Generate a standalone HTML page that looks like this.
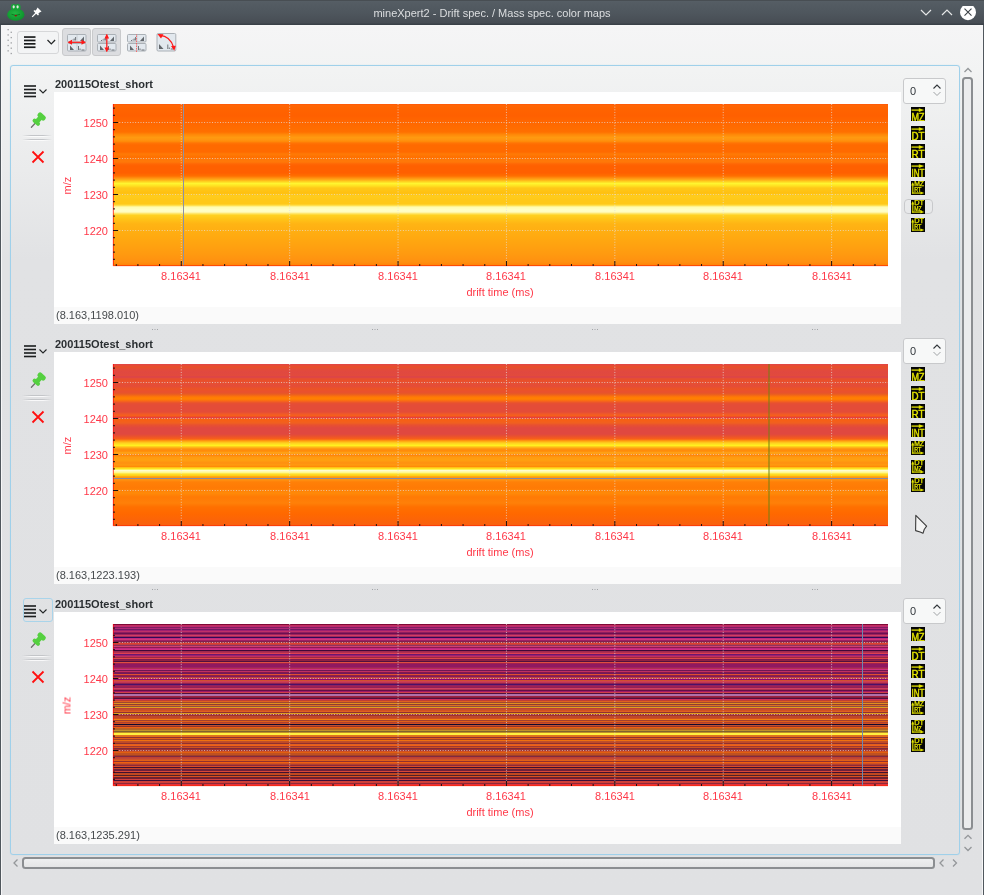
<!DOCTYPE html>
<html><head><meta charset="utf-8"><title>mineXpert2</title>
<style>
html,body{margin:0;padding:0;width:984px;height:895px;overflow:hidden;background:#e0e1e3;font-family:"Liberation Sans", sans-serif;}
</style></head><body>
<div style="position:absolute;left:0px;top:0px;width:984px;height:25px;background:linear-gradient(#484e53 0px,#484e53 1px,#565f66 1px,#545c63 3px,#4f575e 12px,#474d54 23px,#3a4148 24px,#3a4148 25px);"></div>
<div style="position:absolute;left:291.50px;width:400px;text-align:center;top:8.29px;font-size:11px;line-height:11px;color:#dcdee0;font-weight:normal;white-space:nowrap;will-change:transform">mineXpert2 - Drift spec. / Mass spec. color maps</div>
<svg style="position:absolute;left:6px;top:2px" width="20" height="20" viewBox="0 0 20 20">
<defs><radialGradient id="fg" cx="0.45" cy="0.4" r="0.7"><stop offset="0" stop-color="#22b843"/><stop offset="1" stop-color="#0a8a28"/></radialGradient></defs>
<ellipse cx="9.8" cy="12.6" rx="8.7" ry="6.2" fill="url(#fg)"/>
<ellipse cx="7.6" cy="5.2" rx="2.7" ry="3.1" fill="#16a436"/>
<ellipse cx="11.9" cy="5.2" rx="2.7" ry="3.1" fill="#16a436"/>
<ellipse cx="7.7" cy="4.8" rx="1.1" ry="1.6" fill="#e0e6e0"/>
<ellipse cx="11.6" cy="4.8" rx="1.1" ry="1.6" fill="#e0e6e0"/>
<path d="M5.5 12.3 Q9.8 14.5 14 12.3" stroke="#08701c" stroke-width="0.8" fill="none"/>
<ellipse cx="9.8" cy="13.6" rx="1.1" ry="0.9" fill="#a01010"/>
</svg>
<svg style="position:absolute;left:31px;top:6px" width="12" height="12" viewBox="0 0 12 12">
<path d="M6.5 1.5 L10.5 5.5 L8.5 6.5 L6.5 8.5 L5.5 7.5 L3.5 5.5 L5.5 3.5 Z" fill="#fff"/>
<path d="M1.2 10.8 L5 7" stroke="#fff" stroke-width="1.2"/>
<path d="M3 4.5 L7.5 9" stroke="#fff" stroke-width="1.5"/>
</svg>
<svg style="position:absolute;left:918px;top:6px" width="60" height="18" viewBox="0 0 60 18">
<path d="M3 4 L8 9 L13 4" stroke="#e6e7e8" stroke-width="1.2" fill="none"/>
<path d="M24 9 L29 4 L34 9" stroke="#e6e7e8" stroke-width="1.2" fill="none"/>
<circle cx="50" cy="6.2" r="8" fill="#ffffff"/>
<path d="M46.5 2.7 L53.5 9.7 M53.5 2.7 L46.5 9.7" stroke="#3c4247" stroke-width="1.1"/>
</svg>
<div style="position:absolute;left:0px;top:25px;width:984px;height:870px;background:linear-gradient(#f8f8f8 0px,#f5f5f6 2px,#f2f3f3 45px,#eaebec 145px,#e1e2e4 235px,#e0e1e3 870px);"></div>
<div style="position:absolute;left:0px;top:25px;width:1px;height:870px;background:#50575d;"></div>
<div style="position:absolute;left:1px;top:25px;width:1px;height:870px;background:#f6f6f7;"></div>
<div style="position:absolute;left:983px;top:25px;width:1px;height:870px;background:#50575d;"></div>
<div style="position:absolute;left:982px;top:25px;width:1px;height:870px;background:#f6f6f7;"></div>
<svg style="position:absolute;left:7px;top:28.7px" width="6" height="28"><rect x="0.5" y="0.00" width="1.3" height="1.3" fill="#9c9ea1"/><rect x="3.6" y="2.65" width="1.3" height="1.3" fill="#9c9ea1"/><rect x="0.5" y="5.30" width="1.3" height="1.3" fill="#9c9ea1"/><rect x="3.6" y="7.95" width="1.3" height="1.3" fill="#9c9ea1"/><rect x="0.5" y="10.60" width="1.3" height="1.3" fill="#9c9ea1"/><rect x="3.6" y="13.25" width="1.3" height="1.3" fill="#9c9ea1"/><rect x="0.5" y="15.90" width="1.3" height="1.3" fill="#9c9ea1"/><rect x="3.6" y="18.55" width="1.3" height="1.3" fill="#9c9ea1"/><rect x="0.5" y="21.20" width="1.3" height="1.3" fill="#9c9ea1"/><rect x="3.6" y="23.85" width="1.3" height="1.3" fill="#9c9ea1"/></svg>
<div style="position:absolute;left:17px;top:31px;width:42px;height:23px;background:#f3f4f5;border:1px solid #d6d7d9;border-radius:3px;box-sizing:border-box;"></div>
<svg style="position:absolute;left:24px;top:36px" width="34" height="14" viewBox="0 0 34 14">
<rect x="0" y="0.2" width="11.5" height="1.7" fill="#1b1d1e"/><rect x="0" y="3.6" width="11.5" height="1.7" fill="#1b1d1e"/>
<rect x="0" y="7" width="11.5" height="1.7" fill="#1b1d1e"/><rect x="0" y="10.4" width="11.5" height="1.7" fill="#1b1d1e"/>
<path d="M23.5 4 L27.3 8 L31.1 4" stroke="#232627" stroke-width="1.2" fill="none"/>
</svg>
<div style="position:absolute;left:62px;top:28px;width:29px;height:28px;background:#dcdde0;border:1px solid #c9cacc;border-radius:3px;box-sizing:border-box;"></div>
<div style="position:absolute;left:92px;top:28px;width:29px;height:28px;background:#dcdde0;border:1px solid #c9cacc;border-radius:3px;box-sizing:border-box;"></div>
<svg style="position:absolute;left:67px;top:34px" width="20" height="18" viewBox="0 0 20 18"><rect x="0.5" y="0.5" width="18.5" height="7.5" rx="1" fill="#e2e8ee" stroke="#aab0b6" stroke-width="1"/><rect x="0.5" y="9.5" width="18.5" height="7.5" rx="1" fill="#e2e8ee" stroke="#aab0b6" stroke-width="1"/><path d="M4 6.5 h1 M6 6.5 v-1 M7.2 6.5 v-2 M8.6 6.5 v-3.5" stroke="#62676c" stroke-width="0.9"/><path d="M13 7 L17 7 L17 2.5 Z" fill="#62676c"/><path d="M10 1 V7.5" stroke="#b8bec4" stroke-width="0.6"/><path d="M3 16 L3 11.5 L7 16 Z" fill="#62676c"/><path d="M11.5 16 v-4 M13 16 v-1.5 M14.5 16 h3" stroke="#62676c" stroke-width="0.9"/><path d="M10 10 V16.5" stroke="#b8bec4" stroke-width="0.6"/><path d="M3.5 8.3 H15.5" stroke="#ff1818" stroke-width="1.2"/><path d="M0.5 8.3 L5 5.8 L5 10.8 Z M19 8.3 L14.5 5.8 L14.5 10.8 Z" fill="#ff1818"/></svg>
<svg style="position:absolute;left:97px;top:34px" width="20" height="18" viewBox="0 0 20 18"><rect x="0.5" y="0.5" width="18.5" height="7.5" rx="1" fill="#e2e8ee" stroke="#aab0b6" stroke-width="1"/><rect x="0.5" y="9.5" width="18.5" height="7.5" rx="1" fill="#e2e8ee" stroke="#aab0b6" stroke-width="1"/><path d="M4 6.5 h1 M6 6.5 v-1 M7.2 6.5 v-2 M8.6 6.5 v-3.5" stroke="#62676c" stroke-width="0.9"/><path d="M13 7 L17 7 L17 2.5 Z" fill="#62676c"/><path d="M10 1 V7.5" stroke="#b8bec4" stroke-width="0.6"/><path d="M3 16 L3 11.5 L7 16 Z" fill="#62676c"/><path d="M11.5 16 v-4 M13 16 v-1.5 M14.5 16 h3" stroke="#62676c" stroke-width="0.9"/><path d="M10 10 V16.5" stroke="#b8bec4" stroke-width="0.6"/><path d="M9.8 3 V15" stroke="#ff1818" stroke-width="1.2"/><path d="M9.8 -0.5 L7.5 4.5 L12.1 4.5 Z M9.8 18.5 L7.5 13.5 L12.1 13.5 Z" fill="#ff1818"/></svg>
<svg style="position:absolute;left:127px;top:34px" width="20" height="18" viewBox="0 0 20 18"><rect x="0.5" y="0.5" width="18.5" height="7.5" rx="1" fill="#e2e8ee" stroke="#aab0b6" stroke-width="1"/><rect x="0.5" y="9.5" width="18.5" height="7.5" rx="1" fill="#e2e8ee" stroke="#aab0b6" stroke-width="1"/><path d="M4 6.5 h1 M6 6.5 v-1 M7.2 6.5 v-2 M8.6 6.5 v-3.5" stroke="#62676c" stroke-width="0.9"/><path d="M13 7 L17 7 L17 2.5 Z" fill="#62676c"/><path d="M10 1 V7.5" stroke="#b8bec4" stroke-width="0.6"/><path d="M3 16 L3 11.5 L7 16 Z" fill="#62676c"/><path d="M11.5 16 v-4 M13 16 v-1.5 M14.5 16 h3" stroke="#62676c" stroke-width="0.9"/><path d="M10 10 V16.5" stroke="#b8bec4" stroke-width="0.6"/><path d="M9.5 -1 V19" stroke="#ff5050" stroke-width="0.8" stroke-dasharray="1.5 1"/></svg>
<svg style="position:absolute;left:156px;top:33px" width="21" height="19" viewBox="0 0 21 19">
<rect x="1" y="0.5" width="18.8" height="17.5" rx="1.2" fill="#e2e8ee" stroke="#aab0b6" stroke-width="1"/>
<path d="M3 16 L3 11 L7.5 16 Z" fill="#62676c"/>
<path d="M11.8 16 v-4.5 M13.3 16 v-1.5 M14.8 16 h2.5" stroke="#62676c" stroke-width="0.9"/>
<path d="M4 2.3 Q14 3 17.5 14" stroke="#ff1818" stroke-width="1.2" fill="none"/>
<path d="M1.5 1 L7.5 1.3 L5 5.5 Z M18.3 17.8 L15 13 L19.8 12.8 Z" fill="#ff1818"/>
</svg>
<div style="position:absolute;left:10px;top:65px;width:950px;height:790px;border:1px solid #9fd0ea;border-radius:3px;box-sizing:border-box;box-shadow:0 0 0.8px rgba(150,205,235,0.8);"></div>
<svg style="position:absolute;left:24px;top:85px" width="25" height="13" viewBox="0 0 25 13">
<rect x="0" y="0.2" width="12" height="1.6" fill="#1b1d1e"/><rect x="0" y="3.7" width="12" height="1.6" fill="#1b1d1e"/>
<rect x="0" y="7.2" width="12" height="1.6" fill="#1b1d1e"/><rect x="0" y="10.7" width="12" height="1.6" fill="#1b1d1e"/>
<path d="M15.5 4.5 L19 8 L22.5 4.5" stroke="#232627" stroke-width="1.1" fill="none"/>
</svg>
<svg style="position:absolute;left:26px;top:108px" width="24" height="24" viewBox="0 0 24 24">
<path d="M5.4 19.2 L9.2 15.2" stroke="#707070" stroke-width="1.3" stroke-linecap="round"/>
<g transform="translate(12.9,11.4) rotate(-47)">
<rect x="-5.8" y="-4.3" width="4" height="8.6" rx="1.8" fill="#55d040"/>
<rect x="-3" y="-2.4" width="5" height="4.8" fill="#55d040"/>
<rect x="1.4" y="-4.6" width="5.2" height="9.2" rx="2.2" fill="#55d040"/>
</g>
</svg>
<div style="position:absolute;left:22px;top:135px;width:30px;height:1px;background:linear-gradient(to right,rgba(190,192,196,0),#c3c5c8 30%,#c3c5c8 70%,rgba(190,192,196,0));"></div>
<div style="position:absolute;left:22px;top:136px;width:30px;height:1px;background:linear-gradient(to right,rgba(255,255,255,0),rgba(255,255,255,0.8) 30%,rgba(255,255,255,0.8) 70%,rgba(255,255,255,0));"></div>
<div style="position:absolute;left:22px;top:139px;width:30px;height:1px;background:linear-gradient(to right,rgba(190,192,196,0),#c3c5c8 30%,#c3c5c8 70%,rgba(190,192,196,0));"></div>
<div style="position:absolute;left:22px;top:140px;width:30px;height:1px;background:linear-gradient(to right,rgba(255,255,255,0),rgba(255,255,255,0.8) 30%,rgba(255,255,255,0.8) 70%,rgba(255,255,255,0));"></div>
<svg style="position:absolute;left:31px;top:150px" width="14" height="14" viewBox="0 0 14 14">
<path d="M1.5 1.5 L12.5 12.5 M12.5 1.5 L1.5 12.5" stroke="#ff1010" stroke-width="1.8"/>
</svg>
<div style="position:absolute;left:55px;top:78.99px;font-size:11px;line-height:11px;color:#2a2e31;font-weight:bold;white-space:nowrap;will-change:transform;">200115Otest_short</div>
<div style="position:absolute;left:54px;top:92px;width:847px;height:215px;background:#ffffff;"></div>
<div style="position:absolute;left:54px;top:307px;width:847px;height:17px;background:#fafafa;"></div>
<div style="position:absolute;left:55.6px;top:310.19px;font-size:11px;line-height:11px;color:#45494c;font-weight:normal;white-space:nowrap;will-change:transform;">(8.163,1198.010)</div>
<div style="position:absolute;left:113px;top:104px;width:775px;height:162px;background:linear-gradient(to bottom,#ff500a 0px,#ff6605 1px,#ff6300 5px,#ff6000 12px,#ff6600 17px,#ff7000 28px,#ff8808 30.5px,#ff9a10 33.5px,#ff9410 36px,#ff8a08 37.5px,#ff7405 39px,#ff6a00 41px,#ff6a00 48px,#ff7a05 50px,#ff7000 53px,#ff7808 56px,#ff7808 58px,#ff6605 60px,#ff6000 62px,#ff6000 69px,#ff7000 72px,#ff9010 74px,#ffb018 76px,#ffd020 77.5px,#fff530 79.5px,#ffe020 82px,#ffc818 84px,#ffc010 89px,#ffcc1c 92px,#ffc818 96px,#ffc818 100px,#ffe050 101.5px,#fffbb0 103px,#ffffc8 106px,#fffcc0 108px,#ffe050 110px,#ffd020 111.5px,#ffc418 115px,#ffb414 120px,#ffa810 135px,#ff9a10 150px,#ff9010 158px,#ff8004 162px);"></div>
<svg style="position:absolute;left:0;top:0" width="984" height="895"><line x1="114" y1="122.5" x2="888" y2="122.5" stroke="rgba(228,224,222,0.72)" stroke-width="1" stroke-dasharray="1 1.65"/><line x1="114" y1="158.5" x2="888" y2="158.5" stroke="rgba(228,224,222,0.72)" stroke-width="1" stroke-dasharray="1 1.65"/><line x1="114" y1="194.5" x2="888" y2="194.5" stroke="rgba(228,224,222,0.72)" stroke-width="1" stroke-dasharray="1 1.65"/><line x1="114" y1="230.5" x2="888" y2="230.5" stroke="rgba(228,224,222,0.72)" stroke-width="1" stroke-dasharray="1 1.65"/><line x1="181.27" y1="104" x2="181.27" y2="265" stroke="rgba(228,224,222,0.72)" stroke-width="1" stroke-dasharray="1 1.65"/><line x1="289.66" y1="104" x2="289.66" y2="265" stroke="rgba(228,224,222,0.72)" stroke-width="1" stroke-dasharray="1 1.65"/><line x1="398.05" y1="104" x2="398.05" y2="265" stroke="rgba(228,224,222,0.72)" stroke-width="1" stroke-dasharray="1 1.65"/><line x1="506.44" y1="104" x2="506.44" y2="265" stroke="rgba(228,224,222,0.72)" stroke-width="1" stroke-dasharray="1 1.65"/><line x1="614.83" y1="104" x2="614.83" y2="265" stroke="rgba(228,224,222,0.72)" stroke-width="1" stroke-dasharray="1 1.65"/><line x1="723.22" y1="104" x2="723.22" y2="265" stroke="rgba(228,224,222,0.72)" stroke-width="1" stroke-dasharray="1 1.65"/><line x1="831.61" y1="104" x2="831.61" y2="265" stroke="rgba(228,224,222,0.72)" stroke-width="1" stroke-dasharray="1 1.65"/></svg>
<div style="position:absolute;left:183px;top:104px;width:1px;height:162px;background:#8a90a8;"></div>
<div style="position:absolute;left:113px;top:104px;width:1px;height:161px;background:rgba(255,0,0,0.6);"></div>
<div style="position:absolute;left:112px;top:104px;width:1px;height:162px;background:rgba(255,0,0,0.12);"></div>
<div style="position:absolute;left:113px;top:265px;width:775px;height:1px;background:rgba(255,40,0,0.6);"></div>
<div style="position:absolute;left:113px;top:266px;width:775px;height:1px;background:rgba(255,0,0,0.1);"></div>
<svg style="position:absolute;left:0;top:0" width="984" height="895"><rect x="113" y="107.60" width="2" height="1" fill="#1a1010"/><rect x="113" y="114.80" width="2" height="1" fill="#1a1010"/><rect x="113" y="122.00" width="5" height="1" fill="#1a1010"/><rect x="113" y="129.20" width="2" height="1" fill="#1a1010"/><rect x="113" y="136.40" width="2" height="1" fill="#1a1010"/><rect x="113" y="143.60" width="2" height="1" fill="#1a1010"/><rect x="113" y="150.80" width="2" height="1" fill="#1a1010"/><rect x="113" y="158.00" width="5" height="1" fill="#1a1010"/><rect x="113" y="165.20" width="2" height="1" fill="#1a1010"/><rect x="113" y="172.40" width="2" height="1" fill="#1a1010"/><rect x="113" y="179.60" width="2" height="1" fill="#1a1010"/><rect x="113" y="186.80" width="2" height="1" fill="#1a1010"/><rect x="113" y="194.00" width="5" height="1" fill="#1a1010"/><rect x="113" y="201.20" width="2" height="1" fill="#1a1010"/><rect x="113" y="208.40" width="2" height="1" fill="#1a1010"/><rect x="113" y="215.60" width="2" height="1" fill="#1a1010"/><rect x="113" y="222.80" width="2" height="1" fill="#1a1010"/><rect x="113" y="230.00" width="5" height="1" fill="#1a1010"/><rect x="113" y="237.20" width="2" height="1" fill="#1a1010"/><rect x="113" y="244.40" width="2" height="1" fill="#1a1010"/><rect x="113" y="251.60" width="2" height="1" fill="#1a1010"/><rect x="113" y="258.80" width="2" height="1" fill="#1a1010"/><rect x="115.74" y="264" width="1" height="2" fill="#1a1010"/><rect x="137.41" y="264" width="1" height="2" fill="#1a1010"/><rect x="159.09" y="264" width="1" height="2" fill="#1a1010"/><rect x="180.77" y="261" width="1" height="5" fill="#1a1010"/><rect x="202.45" y="264" width="1" height="2" fill="#1a1010"/><rect x="224.13" y="264" width="1" height="2" fill="#1a1010"/><rect x="245.80" y="264" width="1" height="2" fill="#1a1010"/><rect x="267.48" y="264" width="1" height="2" fill="#1a1010"/><rect x="289.16" y="261" width="1" height="5" fill="#1a1010"/><rect x="310.84" y="264" width="1" height="2" fill="#1a1010"/><rect x="332.52" y="264" width="1" height="2" fill="#1a1010"/><rect x="354.19" y="264" width="1" height="2" fill="#1a1010"/><rect x="375.87" y="264" width="1" height="2" fill="#1a1010"/><rect x="397.55" y="261" width="1" height="5" fill="#1a1010"/><rect x="419.23" y="264" width="1" height="2" fill="#1a1010"/><rect x="440.91" y="264" width="1" height="2" fill="#1a1010"/><rect x="462.58" y="264" width="1" height="2" fill="#1a1010"/><rect x="484.26" y="264" width="1" height="2" fill="#1a1010"/><rect x="505.94" y="261" width="1" height="5" fill="#1a1010"/><rect x="527.62" y="264" width="1" height="2" fill="#1a1010"/><rect x="549.30" y="264" width="1" height="2" fill="#1a1010"/><rect x="570.97" y="264" width="1" height="2" fill="#1a1010"/><rect x="592.65" y="264" width="1" height="2" fill="#1a1010"/><rect x="614.33" y="261" width="1" height="5" fill="#1a1010"/><rect x="636.01" y="264" width="1" height="2" fill="#1a1010"/><rect x="657.69" y="264" width="1" height="2" fill="#1a1010"/><rect x="679.36" y="264" width="1" height="2" fill="#1a1010"/><rect x="701.04" y="264" width="1" height="2" fill="#1a1010"/><rect x="722.72" y="261" width="1" height="5" fill="#1a1010"/><rect x="744.40" y="264" width="1" height="2" fill="#1a1010"/><rect x="766.08" y="264" width="1" height="2" fill="#1a1010"/><rect x="787.75" y="264" width="1" height="2" fill="#1a1010"/><rect x="809.43" y="264" width="1" height="2" fill="#1a1010"/><rect x="831.11" y="261" width="1" height="5" fill="#1a1010"/><rect x="852.79" y="264" width="1" height="2" fill="#1a1010"/><rect x="874.47" y="264" width="1" height="2" fill="#1a1010"/></svg>
<div style="position:absolute;left:60px;width:48px;text-align:right;top:118.19px;font-size:11px;line-height:11px;color:#ff3848;will-change:transform">1250</div>
<div style="position:absolute;left:60px;width:48px;text-align:right;top:154.19px;font-size:11px;line-height:11px;color:#ff3848;will-change:transform">1240</div>
<div style="position:absolute;left:60px;width:48px;text-align:right;top:190.19px;font-size:11px;line-height:11px;color:#ff3848;will-change:transform">1230</div>
<div style="position:absolute;left:60px;width:48px;text-align:right;top:226.19px;font-size:11px;line-height:11px;color:#ff3848;will-change:transform">1220</div>
<div style="position:absolute;left:151.27px;width:60px;text-align:center;top:270.69px;font-size:11px;line-height:11px;color:#ff3848;font-weight:normal;white-space:nowrap;will-change:transform">8.16341</div>
<div style="position:absolute;left:259.66px;width:60px;text-align:center;top:270.69px;font-size:11px;line-height:11px;color:#ff3848;font-weight:normal;white-space:nowrap;will-change:transform">8.16341</div>
<div style="position:absolute;left:368.05px;width:60px;text-align:center;top:270.69px;font-size:11px;line-height:11px;color:#ff3848;font-weight:normal;white-space:nowrap;will-change:transform">8.16341</div>
<div style="position:absolute;left:476.44px;width:60px;text-align:center;top:270.69px;font-size:11px;line-height:11px;color:#ff3848;font-weight:normal;white-space:nowrap;will-change:transform">8.16341</div>
<div style="position:absolute;left:584.83px;width:60px;text-align:center;top:270.69px;font-size:11px;line-height:11px;color:#ff3848;font-weight:normal;white-space:nowrap;will-change:transform">8.16341</div>
<div style="position:absolute;left:693.22px;width:60px;text-align:center;top:270.69px;font-size:11px;line-height:11px;color:#ff3848;font-weight:normal;white-space:nowrap;will-change:transform">8.16341</div>
<div style="position:absolute;left:801.61px;width:60px;text-align:center;top:270.69px;font-size:11px;line-height:11px;color:#ff3848;font-weight:normal;white-space:nowrap;will-change:transform">8.16341</div>
<div style="position:absolute;left:450.00px;width:100px;text-align:center;top:287.19px;font-size:11px;line-height:11px;color:#ff3848;font-weight:normal;white-space:nowrap;will-change:transform">drift time (ms)</div>
<div style="position:absolute;left:46.8px;top:179.5px;width:40px;height:11px;text-align:center;font-size:11px;line-height:11px;color:#ff3848;transform:rotate(-90deg);">m/z</div>
<svg style="position:absolute;left:152px;top:329px" width="7" height="2"><rect x="0" y="0" width="1" height="1" fill="#a3a5a8"/><rect x="2.5" y="0" width="1" height="1" fill="#a3a5a8"/><rect x="5" y="0" width="1" height="1" fill="#a3a5a8"/></svg>
<svg style="position:absolute;left:372px;top:329px" width="7" height="2"><rect x="0" y="0" width="1" height="1" fill="#a3a5a8"/><rect x="2.5" y="0" width="1" height="1" fill="#a3a5a8"/><rect x="5" y="0" width="1" height="1" fill="#a3a5a8"/></svg>
<svg style="position:absolute;left:592px;top:329px" width="7" height="2"><rect x="0" y="0" width="1" height="1" fill="#a3a5a8"/><rect x="2.5" y="0" width="1" height="1" fill="#a3a5a8"/><rect x="5" y="0" width="1" height="1" fill="#a3a5a8"/></svg>
<svg style="position:absolute;left:812px;top:329px" width="7" height="2"><rect x="0" y="0" width="1" height="1" fill="#a3a5a8"/><rect x="2.5" y="0" width="1" height="1" fill="#a3a5a8"/><rect x="5" y="0" width="1" height="1" fill="#a3a5a8"/></svg>
<div style="position:absolute;left:903px;top:78px;width:43px;height:26px;background:#f7f8f8;border:1px solid #c8c9cb;border-radius:3px;box-sizing:border-box;"></div>
<div style="position:absolute;left:909.5px;top:86.19px;font-size:11px;line-height:11px;color:#31363b;font-weight:normal;white-space:nowrap;will-change:transform;">0</div>
<svg style="position:absolute;left:932px;top:83px" width="10" height="14" viewBox="0 0 10 14">
<path d="M1.5 5.5 L5 2 L8.5 5.5" stroke="#31363b" stroke-width="1.1" fill="none"/>
<path d="M1.5 9 L5 12.5 L8.5 9" stroke="#a0a3a6" stroke-width="1" fill="none"/>
</svg>
<svg style="position:absolute;left:911px;top:107.0px" width="14" height="14" viewBox="0 0 14 14"><rect width="14" height="14" fill="#050505"/><path d="M0.5 3.1 H9" stroke="#e4e400" stroke-width="1.3"/><path d="M13.3 3.1 L7.8 1.2 L7.8 5 Z" fill="#e4e400"/><text x="0.5" y="13.6" font-family="Liberation Sans" font-size="10" fill="#e4e400" stroke="#e4e400" stroke-width="0.4" textLength="13" lengthAdjust="spacingAndGlyphs">MZ</text></svg>
<svg style="position:absolute;left:911px;top:126.0px" width="14" height="14" viewBox="0 0 14 14"><rect width="14" height="14" fill="#050505"/><path d="M0.5 3.1 H9" stroke="#e4e400" stroke-width="1.3"/><path d="M13.3 3.1 L7.8 1.2 L7.8 5 Z" fill="#e4e400"/><text x="0.5" y="13.6" font-family="Liberation Sans" font-size="10" fill="#e4e400" stroke="#e4e400" stroke-width="0.4" textLength="13" lengthAdjust="spacingAndGlyphs">DT</text></svg>
<svg style="position:absolute;left:911px;top:144.0px" width="14" height="14" viewBox="0 0 14 14"><rect width="14" height="14" fill="#050505"/><path d="M0.5 3.1 H9" stroke="#e4e400" stroke-width="1.3"/><path d="M13.3 3.1 L7.8 1.2 L7.8 5 Z" fill="#e4e400"/><text x="0.5" y="13.6" font-family="Liberation Sans" font-size="10" fill="#e4e400" stroke="#e4e400" stroke-width="0.4" textLength="13" lengthAdjust="spacingAndGlyphs">RT</text></svg>
<svg style="position:absolute;left:911px;top:163.0px" width="14" height="14" viewBox="0 0 14 14"><rect width="14" height="14" fill="#050505"/><path d="M0.5 3.1 H9" stroke="#e4e400" stroke-width="1.3"/><path d="M13.3 3.1 L7.8 1.2 L7.8 5 Z" fill="#e4e400"/><text x="0.5" y="13.6" font-family="Liberation Sans" font-size="10" fill="#e4e400" stroke="#e4e400" stroke-width="0.4" textLength="13" lengthAdjust="spacingAndGlyphs">INT</text></svg>
<svg style="position:absolute;left:911px;top:181.0px" width="14" height="14" viewBox="0 0 14 14"><rect width="14" height="14" fill="#050505"/><path d="M1.7 12.5 V2.5" stroke="#e4e400" stroke-width="1.6" opacity="0.75"/><path d="M1.7 1 L0.3 4.5 L3.1 4.5 Z" fill="#e4e400"/><path d="M1 12.1 H11" stroke="#e4e400" stroke-width="1.6" opacity="0.75"/><path d="M13.3 12.1 L9.5 10.6 L9.5 13.6 Z" fill="#e4e400"/><text x="3.2" y="5.4" font-family="Liberation Sans" font-size="6.3" fill="#e4e400" stroke="#e4e400" stroke-width="0.25" textLength="9.8" lengthAdjust="spacingAndGlyphs">MZ</text><text x="3.2" y="10.9" font-family="Liberation Sans" font-size="6.3" fill="#e4e400" stroke="#e4e400" stroke-width="0.25" textLength="7.3" lengthAdjust="spacingAndGlyphs">RT</text></svg>
<div style="position:absolute;left:903.5px;top:199px;width:29px;height:15px;border:1px solid #c8c9cb;border-radius:4px;box-sizing:border-box;background:rgba(255,255,255,0.1);"></div>
<svg style="position:absolute;left:911px;top:200.0px" width="14" height="14" viewBox="0 0 14 14"><rect width="14" height="14" fill="#050505"/><path d="M1.7 12.5 V2.5" stroke="#e4e400" stroke-width="1.6" opacity="0.75"/><path d="M1.7 1 L0.3 4.5 L3.1 4.5 Z" fill="#e4e400"/><path d="M1 12.1 H11" stroke="#e4e400" stroke-width="1.6" opacity="0.75"/><path d="M13.3 12.1 L9.5 10.6 L9.5 13.6 Z" fill="#e4e400"/><text x="3.2" y="5.4" font-family="Liberation Sans" font-size="6.3" fill="#e4e400" stroke="#e4e400" stroke-width="0.25" textLength="9.8" lengthAdjust="spacingAndGlyphs">DT</text><text x="3.2" y="10.9" font-family="Liberation Sans" font-size="6.3" fill="#e4e400" stroke="#e4e400" stroke-width="0.25" textLength="7.3" lengthAdjust="spacingAndGlyphs">MZ</text></svg>
<svg style="position:absolute;left:911px;top:218.0px" width="14" height="14" viewBox="0 0 14 14"><rect width="14" height="14" fill="#050505"/><path d="M1.7 12.5 V2.5" stroke="#e4e400" stroke-width="1.6" opacity="0.75"/><path d="M1.7 1 L0.3 4.5 L3.1 4.5 Z" fill="#e4e400"/><path d="M1 12.1 H11" stroke="#e4e400" stroke-width="1.6" opacity="0.75"/><path d="M13.3 12.1 L9.5 10.6 L9.5 13.6 Z" fill="#e4e400"/><text x="3.2" y="5.4" font-family="Liberation Sans" font-size="6.3" fill="#e4e400" stroke="#e4e400" stroke-width="0.25" textLength="9.8" lengthAdjust="spacingAndGlyphs">DT</text><text x="3.2" y="10.9" font-family="Liberation Sans" font-size="6.3" fill="#e4e400" stroke="#e4e400" stroke-width="0.25" textLength="7.3" lengthAdjust="spacingAndGlyphs">RT</text></svg>
<svg style="position:absolute;left:24px;top:345px" width="25" height="13" viewBox="0 0 25 13">
<rect x="0" y="0.2" width="12" height="1.6" fill="#1b1d1e"/><rect x="0" y="3.7" width="12" height="1.6" fill="#1b1d1e"/>
<rect x="0" y="7.2" width="12" height="1.6" fill="#1b1d1e"/><rect x="0" y="10.7" width="12" height="1.6" fill="#1b1d1e"/>
<path d="M15.5 4.5 L19 8 L22.5 4.5" stroke="#232627" stroke-width="1.1" fill="none"/>
</svg>
<svg style="position:absolute;left:26px;top:368px" width="24" height="24" viewBox="0 0 24 24">
<path d="M5.4 19.2 L9.2 15.2" stroke="#707070" stroke-width="1.3" stroke-linecap="round"/>
<g transform="translate(12.9,11.4) rotate(-47)">
<rect x="-5.8" y="-4.3" width="4" height="8.6" rx="1.8" fill="#55d040"/>
<rect x="-3" y="-2.4" width="5" height="4.8" fill="#55d040"/>
<rect x="1.4" y="-4.6" width="5.2" height="9.2" rx="2.2" fill="#55d040"/>
</g>
</svg>
<div style="position:absolute;left:22px;top:395px;width:30px;height:1px;background:linear-gradient(to right,rgba(190,192,196,0),#c3c5c8 30%,#c3c5c8 70%,rgba(190,192,196,0));"></div>
<div style="position:absolute;left:22px;top:396px;width:30px;height:1px;background:linear-gradient(to right,rgba(255,255,255,0),rgba(255,255,255,0.8) 30%,rgba(255,255,255,0.8) 70%,rgba(255,255,255,0));"></div>
<div style="position:absolute;left:22px;top:399px;width:30px;height:1px;background:linear-gradient(to right,rgba(190,192,196,0),#c3c5c8 30%,#c3c5c8 70%,rgba(190,192,196,0));"></div>
<div style="position:absolute;left:22px;top:400px;width:30px;height:1px;background:linear-gradient(to right,rgba(255,255,255,0),rgba(255,255,255,0.8) 30%,rgba(255,255,255,0.8) 70%,rgba(255,255,255,0));"></div>
<svg style="position:absolute;left:31px;top:410px" width="14" height="14" viewBox="0 0 14 14">
<path d="M1.5 1.5 L12.5 12.5 M12.5 1.5 L1.5 12.5" stroke="#ff1010" stroke-width="1.8"/>
</svg>
<div style="position:absolute;left:55px;top:338.99px;font-size:11px;line-height:11px;color:#2a2e31;font-weight:bold;white-space:nowrap;will-change:transform;">200115Otest_short</div>
<div style="position:absolute;left:54px;top:352px;width:847px;height:215px;background:#ffffff;"></div>
<div style="position:absolute;left:54px;top:567px;width:847px;height:17px;background:#fafafa;"></div>
<div style="position:absolute;left:55.6px;top:570.19px;font-size:11px;line-height:11px;color:#45494c;font-weight:normal;white-space:nowrap;will-change:transform;">(8.163,1223.193)</div>
<div style="position:absolute;left:113px;top:364px;width:775px;height:162px;background:linear-gradient(to bottom,#e04448 0px,#e44a3c 1px,#e85028 3px,#e44c38 5px,#e04840 8px,#e24a3c 12px,#d84050 13px,#e44c38 14px,#e85028 16px,#e85030 18px,#e44c38 22px,#ec5424 25px,#e85030 28px,#e85a24 30px,#ff7a05 33px,#ff8200 35px,#f86818 37px,#e85030 39px,#e44c38 41px,#e44c38 48px,#f05a28 50px,#f86018 52px,#e84030 53px,#e04050 54px,#f86010 55px,#f06020 59px,#e85030 61px,#e04840 64px,#e04840 70px,#e85030 72px,#f86018 75px,#ffa010 77px,#ffd020 79px,#fff020 81.5px,#ffc018 83px,#ff9010 85px,#ff8a08 87px,#ffa818 89px,#ff8008 91px,#ff9a10 93px,#ffa010 96px,#ff9010 99px,#ff9a10 101px,#ff8a08 102.5px,#ffc018 103.5px,#fff020 105px,#fffcd0 106.5px,#fff890 108.5px,#ffe030 110px,#ffd018 111.5px,#ff9a10 113px,#ff9010 116px,#ff8008 118px,#ff7a05 124px,#ff8a08 129px,#ff7a05 133px,#ff8008 139px,#ff7000 143px,#ff6800 150px,#f86010 162px);"></div>
<svg style="position:absolute;left:0;top:0" width="984" height="895"><line x1="114" y1="382.5" x2="888" y2="382.5" stroke="rgba(228,224,222,0.72)" stroke-width="1" stroke-dasharray="1 1.65"/><line x1="114" y1="418.5" x2="888" y2="418.5" stroke="rgba(228,224,222,0.72)" stroke-width="1" stroke-dasharray="1 1.65"/><line x1="114" y1="454.5" x2="888" y2="454.5" stroke="rgba(228,224,222,0.72)" stroke-width="1" stroke-dasharray="1 1.65"/><line x1="114" y1="490.5" x2="888" y2="490.5" stroke="rgba(228,224,222,0.72)" stroke-width="1" stroke-dasharray="1 1.65"/><line x1="181.27" y1="364" x2="181.27" y2="525" stroke="rgba(228,224,222,0.72)" stroke-width="1" stroke-dasharray="1 1.65"/><line x1="289.66" y1="364" x2="289.66" y2="525" stroke="rgba(228,224,222,0.72)" stroke-width="1" stroke-dasharray="1 1.65"/><line x1="398.05" y1="364" x2="398.05" y2="525" stroke="rgba(228,224,222,0.72)" stroke-width="1" stroke-dasharray="1 1.65"/><line x1="506.44" y1="364" x2="506.44" y2="525" stroke="rgba(228,224,222,0.72)" stroke-width="1" stroke-dasharray="1 1.65"/><line x1="614.83" y1="364" x2="614.83" y2="525" stroke="rgba(228,224,222,0.72)" stroke-width="1" stroke-dasharray="1 1.65"/><line x1="723.22" y1="364" x2="723.22" y2="525" stroke="rgba(228,224,222,0.72)" stroke-width="1" stroke-dasharray="1 1.65"/><line x1="831.61" y1="364" x2="831.61" y2="525" stroke="rgba(228,224,222,0.72)" stroke-width="1" stroke-dasharray="1 1.65"/></svg>
<div style="position:absolute;left:113px;top:478px;width:775px;height:1px;background:#8a88a0;"></div><div style="position:absolute;left:768px;top:364px;width:2px;height:162px;background:rgba(113,128,16,0.5);"></div>
<div style="position:absolute;left:113px;top:364px;width:1px;height:161px;background:rgba(255,0,0,0.6);"></div>
<div style="position:absolute;left:112px;top:364px;width:1px;height:162px;background:rgba(255,0,0,0.12);"></div>
<div style="position:absolute;left:113px;top:525px;width:775px;height:1px;background:rgba(255,40,0,0.6);"></div>
<div style="position:absolute;left:113px;top:526px;width:775px;height:1px;background:rgba(255,0,0,0.1);"></div>
<svg style="position:absolute;left:0;top:0" width="984" height="895"><rect x="113" y="367.60" width="2" height="1" fill="#1a1010"/><rect x="113" y="374.80" width="2" height="1" fill="#1a1010"/><rect x="113" y="382.00" width="5" height="1" fill="#1a1010"/><rect x="113" y="389.20" width="2" height="1" fill="#1a1010"/><rect x="113" y="396.40" width="2" height="1" fill="#1a1010"/><rect x="113" y="403.60" width="2" height="1" fill="#1a1010"/><rect x="113" y="410.80" width="2" height="1" fill="#1a1010"/><rect x="113" y="418.00" width="5" height="1" fill="#1a1010"/><rect x="113" y="425.20" width="2" height="1" fill="#1a1010"/><rect x="113" y="432.40" width="2" height="1" fill="#1a1010"/><rect x="113" y="439.60" width="2" height="1" fill="#1a1010"/><rect x="113" y="446.80" width="2" height="1" fill="#1a1010"/><rect x="113" y="454.00" width="5" height="1" fill="#1a1010"/><rect x="113" y="461.20" width="2" height="1" fill="#1a1010"/><rect x="113" y="468.40" width="2" height="1" fill="#1a1010"/><rect x="113" y="475.60" width="2" height="1" fill="#1a1010"/><rect x="113" y="482.80" width="2" height="1" fill="#1a1010"/><rect x="113" y="490.00" width="5" height="1" fill="#1a1010"/><rect x="113" y="497.20" width="2" height="1" fill="#1a1010"/><rect x="113" y="504.40" width="2" height="1" fill="#1a1010"/><rect x="113" y="511.60" width="2" height="1" fill="#1a1010"/><rect x="113" y="518.80" width="2" height="1" fill="#1a1010"/><rect x="115.74" y="524" width="1" height="2" fill="#1a1010"/><rect x="137.41" y="524" width="1" height="2" fill="#1a1010"/><rect x="159.09" y="524" width="1" height="2" fill="#1a1010"/><rect x="180.77" y="521" width="1" height="5" fill="#1a1010"/><rect x="202.45" y="524" width="1" height="2" fill="#1a1010"/><rect x="224.13" y="524" width="1" height="2" fill="#1a1010"/><rect x="245.80" y="524" width="1" height="2" fill="#1a1010"/><rect x="267.48" y="524" width="1" height="2" fill="#1a1010"/><rect x="289.16" y="521" width="1" height="5" fill="#1a1010"/><rect x="310.84" y="524" width="1" height="2" fill="#1a1010"/><rect x="332.52" y="524" width="1" height="2" fill="#1a1010"/><rect x="354.19" y="524" width="1" height="2" fill="#1a1010"/><rect x="375.87" y="524" width="1" height="2" fill="#1a1010"/><rect x="397.55" y="521" width="1" height="5" fill="#1a1010"/><rect x="419.23" y="524" width="1" height="2" fill="#1a1010"/><rect x="440.91" y="524" width="1" height="2" fill="#1a1010"/><rect x="462.58" y="524" width="1" height="2" fill="#1a1010"/><rect x="484.26" y="524" width="1" height="2" fill="#1a1010"/><rect x="505.94" y="521" width="1" height="5" fill="#1a1010"/><rect x="527.62" y="524" width="1" height="2" fill="#1a1010"/><rect x="549.30" y="524" width="1" height="2" fill="#1a1010"/><rect x="570.97" y="524" width="1" height="2" fill="#1a1010"/><rect x="592.65" y="524" width="1" height="2" fill="#1a1010"/><rect x="614.33" y="521" width="1" height="5" fill="#1a1010"/><rect x="636.01" y="524" width="1" height="2" fill="#1a1010"/><rect x="657.69" y="524" width="1" height="2" fill="#1a1010"/><rect x="679.36" y="524" width="1" height="2" fill="#1a1010"/><rect x="701.04" y="524" width="1" height="2" fill="#1a1010"/><rect x="722.72" y="521" width="1" height="5" fill="#1a1010"/><rect x="744.40" y="524" width="1" height="2" fill="#1a1010"/><rect x="766.08" y="524" width="1" height="2" fill="#1a1010"/><rect x="787.75" y="524" width="1" height="2" fill="#1a1010"/><rect x="809.43" y="524" width="1" height="2" fill="#1a1010"/><rect x="831.11" y="521" width="1" height="5" fill="#1a1010"/><rect x="852.79" y="524" width="1" height="2" fill="#1a1010"/><rect x="874.47" y="524" width="1" height="2" fill="#1a1010"/></svg>
<div style="position:absolute;left:60px;width:48px;text-align:right;top:378.19px;font-size:11px;line-height:11px;color:#ff3848;will-change:transform">1250</div>
<div style="position:absolute;left:60px;width:48px;text-align:right;top:414.19px;font-size:11px;line-height:11px;color:#ff3848;will-change:transform">1240</div>
<div style="position:absolute;left:60px;width:48px;text-align:right;top:450.19px;font-size:11px;line-height:11px;color:#ff3848;will-change:transform">1230</div>
<div style="position:absolute;left:60px;width:48px;text-align:right;top:486.19px;font-size:11px;line-height:11px;color:#ff3848;will-change:transform">1220</div>
<div style="position:absolute;left:151.27px;width:60px;text-align:center;top:530.69px;font-size:11px;line-height:11px;color:#ff3848;font-weight:normal;white-space:nowrap;will-change:transform">8.16341</div>
<div style="position:absolute;left:259.66px;width:60px;text-align:center;top:530.69px;font-size:11px;line-height:11px;color:#ff3848;font-weight:normal;white-space:nowrap;will-change:transform">8.16341</div>
<div style="position:absolute;left:368.05px;width:60px;text-align:center;top:530.69px;font-size:11px;line-height:11px;color:#ff3848;font-weight:normal;white-space:nowrap;will-change:transform">8.16341</div>
<div style="position:absolute;left:476.44px;width:60px;text-align:center;top:530.69px;font-size:11px;line-height:11px;color:#ff3848;font-weight:normal;white-space:nowrap;will-change:transform">8.16341</div>
<div style="position:absolute;left:584.83px;width:60px;text-align:center;top:530.69px;font-size:11px;line-height:11px;color:#ff3848;font-weight:normal;white-space:nowrap;will-change:transform">8.16341</div>
<div style="position:absolute;left:693.22px;width:60px;text-align:center;top:530.69px;font-size:11px;line-height:11px;color:#ff3848;font-weight:normal;white-space:nowrap;will-change:transform">8.16341</div>
<div style="position:absolute;left:801.61px;width:60px;text-align:center;top:530.69px;font-size:11px;line-height:11px;color:#ff3848;font-weight:normal;white-space:nowrap;will-change:transform">8.16341</div>
<div style="position:absolute;left:450.00px;width:100px;text-align:center;top:547.19px;font-size:11px;line-height:11px;color:#ff3848;font-weight:normal;white-space:nowrap;will-change:transform">drift time (ms)</div>
<div style="position:absolute;left:46.8px;top:439.5px;width:40px;height:11px;text-align:center;font-size:11px;line-height:11px;color:#ff3848;transform:rotate(-90deg);">m/z</div>
<svg style="position:absolute;left:152px;top:589px" width="7" height="2"><rect x="0" y="0" width="1" height="1" fill="#a3a5a8"/><rect x="2.5" y="0" width="1" height="1" fill="#a3a5a8"/><rect x="5" y="0" width="1" height="1" fill="#a3a5a8"/></svg>
<svg style="position:absolute;left:372px;top:589px" width="7" height="2"><rect x="0" y="0" width="1" height="1" fill="#a3a5a8"/><rect x="2.5" y="0" width="1" height="1" fill="#a3a5a8"/><rect x="5" y="0" width="1" height="1" fill="#a3a5a8"/></svg>
<svg style="position:absolute;left:592px;top:589px" width="7" height="2"><rect x="0" y="0" width="1" height="1" fill="#a3a5a8"/><rect x="2.5" y="0" width="1" height="1" fill="#a3a5a8"/><rect x="5" y="0" width="1" height="1" fill="#a3a5a8"/></svg>
<svg style="position:absolute;left:812px;top:589px" width="7" height="2"><rect x="0" y="0" width="1" height="1" fill="#a3a5a8"/><rect x="2.5" y="0" width="1" height="1" fill="#a3a5a8"/><rect x="5" y="0" width="1" height="1" fill="#a3a5a8"/></svg>
<div style="position:absolute;left:903px;top:338px;width:43px;height:26px;background:#f7f8f8;border:1px solid #c8c9cb;border-radius:3px;box-sizing:border-box;"></div>
<div style="position:absolute;left:909.5px;top:346.19px;font-size:11px;line-height:11px;color:#31363b;font-weight:normal;white-space:nowrap;will-change:transform;">0</div>
<svg style="position:absolute;left:932px;top:343px" width="10" height="14" viewBox="0 0 10 14">
<path d="M1.5 5.5 L5 2 L8.5 5.5" stroke="#31363b" stroke-width="1.1" fill="none"/>
<path d="M1.5 9 L5 12.5 L8.5 9" stroke="#a0a3a6" stroke-width="1" fill="none"/>
</svg>
<svg style="position:absolute;left:911px;top:367.0px" width="14" height="14" viewBox="0 0 14 14"><rect width="14" height="14" fill="#050505"/><path d="M0.5 3.1 H9" stroke="#e4e400" stroke-width="1.3"/><path d="M13.3 3.1 L7.8 1.2 L7.8 5 Z" fill="#e4e400"/><text x="0.5" y="13.6" font-family="Liberation Sans" font-size="10" fill="#e4e400" stroke="#e4e400" stroke-width="0.4" textLength="13" lengthAdjust="spacingAndGlyphs">MZ</text></svg>
<svg style="position:absolute;left:911px;top:386.0px" width="14" height="14" viewBox="0 0 14 14"><rect width="14" height="14" fill="#050505"/><path d="M0.5 3.1 H9" stroke="#e4e400" stroke-width="1.3"/><path d="M13.3 3.1 L7.8 1.2 L7.8 5 Z" fill="#e4e400"/><text x="0.5" y="13.6" font-family="Liberation Sans" font-size="10" fill="#e4e400" stroke="#e4e400" stroke-width="0.4" textLength="13" lengthAdjust="spacingAndGlyphs">DT</text></svg>
<svg style="position:absolute;left:911px;top:404.0px" width="14" height="14" viewBox="0 0 14 14"><rect width="14" height="14" fill="#050505"/><path d="M0.5 3.1 H9" stroke="#e4e400" stroke-width="1.3"/><path d="M13.3 3.1 L7.8 1.2 L7.8 5 Z" fill="#e4e400"/><text x="0.5" y="13.6" font-family="Liberation Sans" font-size="10" fill="#e4e400" stroke="#e4e400" stroke-width="0.4" textLength="13" lengthAdjust="spacingAndGlyphs">RT</text></svg>
<svg style="position:absolute;left:911px;top:423.0px" width="14" height="14" viewBox="0 0 14 14"><rect width="14" height="14" fill="#050505"/><path d="M0.5 3.1 H9" stroke="#e4e400" stroke-width="1.3"/><path d="M13.3 3.1 L7.8 1.2 L7.8 5 Z" fill="#e4e400"/><text x="0.5" y="13.6" font-family="Liberation Sans" font-size="10" fill="#e4e400" stroke="#e4e400" stroke-width="0.4" textLength="13" lengthAdjust="spacingAndGlyphs">INT</text></svg>
<svg style="position:absolute;left:911px;top:441.0px" width="14" height="14" viewBox="0 0 14 14"><rect width="14" height="14" fill="#050505"/><path d="M1.7 12.5 V2.5" stroke="#e4e400" stroke-width="1.6" opacity="0.75"/><path d="M1.7 1 L0.3 4.5 L3.1 4.5 Z" fill="#e4e400"/><path d="M1 12.1 H11" stroke="#e4e400" stroke-width="1.6" opacity="0.75"/><path d="M13.3 12.1 L9.5 10.6 L9.5 13.6 Z" fill="#e4e400"/><text x="3.2" y="5.4" font-family="Liberation Sans" font-size="6.3" fill="#e4e400" stroke="#e4e400" stroke-width="0.25" textLength="9.8" lengthAdjust="spacingAndGlyphs">MZ</text><text x="3.2" y="10.9" font-family="Liberation Sans" font-size="6.3" fill="#e4e400" stroke="#e4e400" stroke-width="0.25" textLength="7.3" lengthAdjust="spacingAndGlyphs">RT</text></svg>
<svg style="position:absolute;left:911px;top:460.0px" width="14" height="14" viewBox="0 0 14 14"><rect width="14" height="14" fill="#050505"/><path d="M1.7 12.5 V2.5" stroke="#e4e400" stroke-width="1.6" opacity="0.75"/><path d="M1.7 1 L0.3 4.5 L3.1 4.5 Z" fill="#e4e400"/><path d="M1 12.1 H11" stroke="#e4e400" stroke-width="1.6" opacity="0.75"/><path d="M13.3 12.1 L9.5 10.6 L9.5 13.6 Z" fill="#e4e400"/><text x="3.2" y="5.4" font-family="Liberation Sans" font-size="6.3" fill="#e4e400" stroke="#e4e400" stroke-width="0.25" textLength="9.8" lengthAdjust="spacingAndGlyphs">DT</text><text x="3.2" y="10.9" font-family="Liberation Sans" font-size="6.3" fill="#e4e400" stroke="#e4e400" stroke-width="0.25" textLength="7.3" lengthAdjust="spacingAndGlyphs">MZ</text></svg>
<svg style="position:absolute;left:911px;top:478.0px" width="14" height="14" viewBox="0 0 14 14"><rect width="14" height="14" fill="#050505"/><path d="M1.7 12.5 V2.5" stroke="#e4e400" stroke-width="1.6" opacity="0.75"/><path d="M1.7 1 L0.3 4.5 L3.1 4.5 Z" fill="#e4e400"/><path d="M1 12.1 H11" stroke="#e4e400" stroke-width="1.6" opacity="0.75"/><path d="M13.3 12.1 L9.5 10.6 L9.5 13.6 Z" fill="#e4e400"/><text x="3.2" y="5.4" font-family="Liberation Sans" font-size="6.3" fill="#e4e400" stroke="#e4e400" stroke-width="0.25" textLength="9.8" lengthAdjust="spacingAndGlyphs">DT</text><text x="3.2" y="10.9" font-family="Liberation Sans" font-size="6.3" fill="#e4e400" stroke="#e4e400" stroke-width="0.25" textLength="7.3" lengthAdjust="spacingAndGlyphs">RT</text></svg>
<div style="position:absolute;left:23px;top:598px;width:30px;height:24px;border:1px solid #a9d4ea;border-radius:3px;box-sizing:border-box;"></div>
<svg style="position:absolute;left:24px;top:605px" width="25" height="13" viewBox="0 0 25 13">
<rect x="0" y="0.2" width="12" height="1.6" fill="#1b1d1e"/><rect x="0" y="3.7" width="12" height="1.6" fill="#1b1d1e"/>
<rect x="0" y="7.2" width="12" height="1.6" fill="#1b1d1e"/><rect x="0" y="10.7" width="12" height="1.6" fill="#1b1d1e"/>
<path d="M15.5 4.5 L19 8 L22.5 4.5" stroke="#232627" stroke-width="1.1" fill="none"/>
</svg>
<svg style="position:absolute;left:26px;top:628px" width="24" height="24" viewBox="0 0 24 24">
<path d="M5.4 19.2 L9.2 15.2" stroke="#707070" stroke-width="1.3" stroke-linecap="round"/>
<g transform="translate(12.9,11.4) rotate(-47)">
<rect x="-5.8" y="-4.3" width="4" height="8.6" rx="1.8" fill="#55d040"/>
<rect x="-3" y="-2.4" width="5" height="4.8" fill="#55d040"/>
<rect x="1.4" y="-4.6" width="5.2" height="9.2" rx="2.2" fill="#55d040"/>
</g>
</svg>
<div style="position:absolute;left:22px;top:655px;width:30px;height:1px;background:linear-gradient(to right,rgba(190,192,196,0),#c3c5c8 30%,#c3c5c8 70%,rgba(190,192,196,0));"></div>
<div style="position:absolute;left:22px;top:656px;width:30px;height:1px;background:linear-gradient(to right,rgba(255,255,255,0),rgba(255,255,255,0.8) 30%,rgba(255,255,255,0.8) 70%,rgba(255,255,255,0));"></div>
<div style="position:absolute;left:22px;top:659px;width:30px;height:1px;background:linear-gradient(to right,rgba(190,192,196,0),#c3c5c8 30%,#c3c5c8 70%,rgba(190,192,196,0));"></div>
<div style="position:absolute;left:22px;top:660px;width:30px;height:1px;background:linear-gradient(to right,rgba(255,255,255,0),rgba(255,255,255,0.8) 30%,rgba(255,255,255,0.8) 70%,rgba(255,255,255,0));"></div>
<svg style="position:absolute;left:31px;top:670px" width="14" height="14" viewBox="0 0 14 14">
<path d="M1.5 1.5 L12.5 12.5 M12.5 1.5 L1.5 12.5" stroke="#ff1010" stroke-width="1.8"/>
</svg>
<div style="position:absolute;left:55px;top:598.99px;font-size:11px;line-height:11px;color:#2a2e31;font-weight:bold;white-space:nowrap;will-change:transform;">200115Otest_short</div>
<div style="position:absolute;left:54px;top:612px;width:847px;height:215px;background:#ffffff;"></div>
<div style="position:absolute;left:54px;top:827px;width:847px;height:17px;background:#fafafa;"></div>
<div style="position:absolute;left:55.6px;top:830.19px;font-size:11px;line-height:11px;color:#45494c;font-weight:normal;white-space:nowrap;will-change:transform;">(8.163,1235.291)</div>
<div style="position:absolute;left:113px;top:624px;width:775px;height:162px;background:linear-gradient(to bottom,#800838 0px,#800838 1px,#c03060 1px,#c03060 2px,#c02870 2px,#c02870 3px,#802060 3px,#802060 4px,#b02878 4px,#b02878 5px,#701860 5px,#701860 6px,#a02070 6px,#a02070 7px,#c03068 7px,#c03068 8px,#901c60 8px,#901c60 9px,#6a1050 9px,#6a1050 10px,#a02060 10px,#a02060 11px,#d04060 11px,#d04060 12px,#a02860 12px,#a02860 13px,#300858 13px,#300858 14px,#c02880 14px,#c02880 15px,#d03878 15px,#d03878 16px,#a02060 16px,#a02060 17px,#802050 17px,#802050 18px,#a03040 18px,#a03040 19px,#e04030 19px,#e04030 20px,#c04040 20px,#c04040 21px,#903060 21px,#903060 22px,#d04070 22px,#d04070 23px,#901850 23px,#901850 24px,#c02880 24px,#c02880 25px,#d03080 25px,#d03080 26px,#400838 26px,#400838 27px,#a02850 27px,#a02850 28px,#b03050 28px,#b03050 29px,#e04050 29px,#e04050 30px,#6a1870 30px,#6a1870 31px,#a02070 31px,#a02070 32px,#c03060 32px,#c03060 33px,#a02840 33px,#a02840 34px,#e04848 34px,#e04848 35px,#801850 35px,#801850 36px,#902040 36px,#902040 37px,#501040 37px,#501040 38px,#e05040 38px,#e05040 39px,#a02050 39px,#a02050 40px,#901860 40px,#901860 41px,#901860 41px,#901860 42px,#901860 42px,#901860 43px,#a02060 43px,#a02060 44px,#b03050 44px,#b03050 45px,#d03080 45px,#d03080 46px,#701850 46px,#701850 47px,#c03060 47px,#c03060 48px,#801850 48px,#801850 49px,#701860 49px,#701860 50px,#e05030 50px,#e05030 51px,#902040 51px,#902040 52px,#801860 52px,#801860 53px,#c04040 53px,#c04040 54px,#c04040 54px,#c04040 55px,#900870 55px,#900870 56px,#d05030 56px,#d05030 57px,#d04050 57px,#d04050 58px,#c03850 58px,#c03850 59px,#902050 59px,#902050 60px,#4a1068 60px,#4a1068 61px,#902060 61px,#902060 62px,#a02050 62px,#a02050 63px,#902058 63px,#902058 64px,#d04060 64px,#d04060 65px,#b03050 65px,#b03050 66px,#601048 66px,#601048 67px,#a01868 67px,#a01868 68px,#d04048 68px,#d04048 69px,#501040 69px,#501040 70px,#b070a8 70px,#b070a8 71px,#b070a8 71px,#b070a8 72px,#a02040 72px,#a02040 73px,#802040 73px,#802040 74px,#501040 74px,#501040 75px,#d03060 75px,#d03060 76px,#c04030 76px,#c04030 77px,#e06020 77px,#e06020 78px,#a04830 78px,#a04830 79px,#e09020 79px,#e09020 80px,#904030 80px,#904030 81px,#e07020 81px,#e07020 82px,#905040 82px,#905040 83px,#e0a020 83px,#e0a020 84px,#c04030 84px,#c04030 85px,#c05030 85px,#c05030 86px,#d05020 86px,#d05020 87px,#e06020 87px,#e06020 88px,#903030 88px,#903030 89px,#e0a020 89px,#e0a020 90px,#a03030 90px,#a03030 91px,#a03030 91px,#a03030 92px,#c04828 92px,#c04828 93px,#c04828 93px,#c04828 94px,#d05020 94px,#d05020 95px,#f08010 95px,#f08010 96px,#a04030 96px,#a04030 97px,#e06018 97px,#e06018 98px,#b04030 98px,#b04030 99px,#d05020 99px,#d05020 100px,#100830 100px,#100830 101px,#c05030 101px,#c05030 102px,#903028 102px,#903028 103px,#f06010 103px,#f06010 104px,#c06020 104px,#c06020 105px,#b06828 105px,#b06828 106px,#c09028 106px,#c09028 107px,#806030 107px,#806030 108px,#c09028 108px,#c09028 109px,#fff040 109px,#fff040 110px,#fff040 110px,#fff040 111px,#e07020 111px,#e07020 112px,#e07018 112px,#e07018 113px,#903030 113px,#903030 114px,#e06018 114px,#e06018 115px,#a04028 115px,#a04028 116px,#f07010 116px,#f07010 117px,#c05028 117px,#c05028 118px,#c04828 118px,#c04828 119px,#903030 119px,#903030 120px,#e06020 120px,#e06020 121px,#f06018 121px,#f06018 122px,#a03830 122px,#a03830 123px,#d05020 123px,#d05020 124px,#802838 124px,#802838 125px,#a03030 125px,#a03030 126px,#a03030 126px,#a03030 127px,#d05020 127px,#d05020 128px,#e06010 128px,#e06010 129px,#c05020 129px,#c05020 130px,#c05020 130px,#c05020 131px,#a04028 131px,#a04028 132px,#802840 132px,#802840 133px,#c04030 133px,#c04030 134px,#c04838 134px,#c04838 135px,#d05028 135px,#d05028 136px,#e06018 136px,#e06018 137px,#903030 137px,#903030 138px,#f06010 138px,#f06010 139px,#d05020 139px,#d05020 140px,#b04030 140px,#b04030 141px,#902838 141px,#902838 142px,#d84c28 142px,#d84c28 143px,#401030 143px,#401030 144px,#c84828 144px,#c84828 145px,#702038 145px,#702038 146px,#702038 146px,#702038 147px,#d84838 147px,#d84838 148px,#401030 148px,#401030 149px,#c04820 149px,#c04820 150px,#c04820 150px,#c04820 151px,#502028 151px,#502028 152px,#d85020 152px,#d85020 153px,#702030 153px,#702030 154px,#702030 154px,#702030 155px,#d04040 155px,#d04040 156px,#401038 156px,#401038 157px,#d04038 157px,#d04038 158px,#d04038 158px,#d04038 159px,#902838 159px,#902838 160px,#e83038 160px,#e83038 161px,#e83038 161px,#e83038 162px);"></div>
<svg style="position:absolute;left:0;top:0" width="984" height="895"><line x1="114" y1="642.5" x2="888" y2="642.5" stroke="rgba(228,224,222,0.72)" stroke-width="1" stroke-dasharray="1 1.65"/><line x1="114" y1="678.5" x2="888" y2="678.5" stroke="rgba(228,224,222,0.72)" stroke-width="1" stroke-dasharray="1 1.65"/><line x1="114" y1="714.5" x2="888" y2="714.5" stroke="rgba(228,224,222,0.72)" stroke-width="1" stroke-dasharray="1 1.65"/><line x1="114" y1="750.5" x2="888" y2="750.5" stroke="rgba(228,224,222,0.72)" stroke-width="1" stroke-dasharray="1 1.65"/><line x1="181.27" y1="624" x2="181.27" y2="785" stroke="rgba(228,224,222,0.72)" stroke-width="1" stroke-dasharray="1 1.65"/><line x1="289.66" y1="624" x2="289.66" y2="785" stroke="rgba(228,224,222,0.72)" stroke-width="1" stroke-dasharray="1 1.65"/><line x1="398.05" y1="624" x2="398.05" y2="785" stroke="rgba(228,224,222,0.72)" stroke-width="1" stroke-dasharray="1 1.65"/><line x1="506.44" y1="624" x2="506.44" y2="785" stroke="rgba(228,224,222,0.72)" stroke-width="1" stroke-dasharray="1 1.65"/><line x1="614.83" y1="624" x2="614.83" y2="785" stroke="rgba(228,224,222,0.72)" stroke-width="1" stroke-dasharray="1 1.65"/><line x1="723.22" y1="624" x2="723.22" y2="785" stroke="rgba(228,224,222,0.72)" stroke-width="1" stroke-dasharray="1 1.65"/><line x1="831.61" y1="624" x2="831.61" y2="785" stroke="rgba(228,224,222,0.72)" stroke-width="1" stroke-dasharray="1 1.65"/></svg>
<div style="position:absolute;left:862px;top:624px;width:1px;height:162px;background:#6a88b0;"></div>
<div style="position:absolute;left:113px;top:624px;width:1px;height:161px;background:rgba(255,0,0,0.6);"></div>
<div style="position:absolute;left:112px;top:624px;width:1px;height:162px;background:rgba(255,0,0,0.12);"></div>
<div style="position:absolute;left:113px;top:785px;width:775px;height:1px;background:rgba(255,40,0,0.6);"></div>
<div style="position:absolute;left:113px;top:786px;width:775px;height:1px;background:rgba(255,0,0,0.1);"></div>
<svg style="position:absolute;left:0;top:0" width="984" height="895"><rect x="113" y="627.60" width="2" height="1" fill="#1a1010"/><rect x="113" y="634.80" width="2" height="1" fill="#1a1010"/><rect x="113" y="642.00" width="5" height="1" fill="#1a1010"/><rect x="113" y="649.20" width="2" height="1" fill="#1a1010"/><rect x="113" y="656.40" width="2" height="1" fill="#1a1010"/><rect x="113" y="663.60" width="2" height="1" fill="#1a1010"/><rect x="113" y="670.80" width="2" height="1" fill="#1a1010"/><rect x="113" y="678.00" width="5" height="1" fill="#1a1010"/><rect x="113" y="685.20" width="2" height="1" fill="#1a1010"/><rect x="113" y="692.40" width="2" height="1" fill="#1a1010"/><rect x="113" y="699.60" width="2" height="1" fill="#1a1010"/><rect x="113" y="706.80" width="2" height="1" fill="#1a1010"/><rect x="113" y="714.00" width="5" height="1" fill="#1a1010"/><rect x="113" y="721.20" width="2" height="1" fill="#1a1010"/><rect x="113" y="728.40" width="2" height="1" fill="#1a1010"/><rect x="113" y="735.60" width="2" height="1" fill="#1a1010"/><rect x="113" y="742.80" width="2" height="1" fill="#1a1010"/><rect x="113" y="750.00" width="5" height="1" fill="#1a1010"/><rect x="113" y="757.20" width="2" height="1" fill="#1a1010"/><rect x="113" y="764.40" width="2" height="1" fill="#1a1010"/><rect x="113" y="771.60" width="2" height="1" fill="#1a1010"/><rect x="113" y="778.80" width="2" height="1" fill="#1a1010"/><rect x="115.74" y="784" width="1" height="2" fill="#1a1010"/><rect x="137.41" y="784" width="1" height="2" fill="#1a1010"/><rect x="159.09" y="784" width="1" height="2" fill="#1a1010"/><rect x="180.77" y="781" width="1" height="5" fill="#1a1010"/><rect x="202.45" y="784" width="1" height="2" fill="#1a1010"/><rect x="224.13" y="784" width="1" height="2" fill="#1a1010"/><rect x="245.80" y="784" width="1" height="2" fill="#1a1010"/><rect x="267.48" y="784" width="1" height="2" fill="#1a1010"/><rect x="289.16" y="781" width="1" height="5" fill="#1a1010"/><rect x="310.84" y="784" width="1" height="2" fill="#1a1010"/><rect x="332.52" y="784" width="1" height="2" fill="#1a1010"/><rect x="354.19" y="784" width="1" height="2" fill="#1a1010"/><rect x="375.87" y="784" width="1" height="2" fill="#1a1010"/><rect x="397.55" y="781" width="1" height="5" fill="#1a1010"/><rect x="419.23" y="784" width="1" height="2" fill="#1a1010"/><rect x="440.91" y="784" width="1" height="2" fill="#1a1010"/><rect x="462.58" y="784" width="1" height="2" fill="#1a1010"/><rect x="484.26" y="784" width="1" height="2" fill="#1a1010"/><rect x="505.94" y="781" width="1" height="5" fill="#1a1010"/><rect x="527.62" y="784" width="1" height="2" fill="#1a1010"/><rect x="549.30" y="784" width="1" height="2" fill="#1a1010"/><rect x="570.97" y="784" width="1" height="2" fill="#1a1010"/><rect x="592.65" y="784" width="1" height="2" fill="#1a1010"/><rect x="614.33" y="781" width="1" height="5" fill="#1a1010"/><rect x="636.01" y="784" width="1" height="2" fill="#1a1010"/><rect x="657.69" y="784" width="1" height="2" fill="#1a1010"/><rect x="679.36" y="784" width="1" height="2" fill="#1a1010"/><rect x="701.04" y="784" width="1" height="2" fill="#1a1010"/><rect x="722.72" y="781" width="1" height="5" fill="#1a1010"/><rect x="744.40" y="784" width="1" height="2" fill="#1a1010"/><rect x="766.08" y="784" width="1" height="2" fill="#1a1010"/><rect x="787.75" y="784" width="1" height="2" fill="#1a1010"/><rect x="809.43" y="784" width="1" height="2" fill="#1a1010"/><rect x="831.11" y="781" width="1" height="5" fill="#1a1010"/><rect x="852.79" y="784" width="1" height="2" fill="#1a1010"/><rect x="874.47" y="784" width="1" height="2" fill="#1a1010"/></svg>
<div style="position:absolute;left:60px;width:48px;text-align:right;top:638.19px;font-size:11px;line-height:11px;color:#ff3848;will-change:transform">1250</div>
<div style="position:absolute;left:60px;width:48px;text-align:right;top:674.19px;font-size:11px;line-height:11px;color:#ff3848;will-change:transform">1240</div>
<div style="position:absolute;left:60px;width:48px;text-align:right;top:710.19px;font-size:11px;line-height:11px;color:#ff3848;will-change:transform">1230</div>
<div style="position:absolute;left:60px;width:48px;text-align:right;top:746.19px;font-size:11px;line-height:11px;color:#ff3848;will-change:transform">1220</div>
<div style="position:absolute;left:151.27px;width:60px;text-align:center;top:790.69px;font-size:11px;line-height:11px;color:#ff3848;font-weight:normal;white-space:nowrap;will-change:transform">8.16341</div>
<div style="position:absolute;left:259.66px;width:60px;text-align:center;top:790.69px;font-size:11px;line-height:11px;color:#ff3848;font-weight:normal;white-space:nowrap;will-change:transform">8.16341</div>
<div style="position:absolute;left:368.05px;width:60px;text-align:center;top:790.69px;font-size:11px;line-height:11px;color:#ff3848;font-weight:normal;white-space:nowrap;will-change:transform">8.16341</div>
<div style="position:absolute;left:476.44px;width:60px;text-align:center;top:790.69px;font-size:11px;line-height:11px;color:#ff3848;font-weight:normal;white-space:nowrap;will-change:transform">8.16341</div>
<div style="position:absolute;left:584.83px;width:60px;text-align:center;top:790.69px;font-size:11px;line-height:11px;color:#ff3848;font-weight:normal;white-space:nowrap;will-change:transform">8.16341</div>
<div style="position:absolute;left:693.22px;width:60px;text-align:center;top:790.69px;font-size:11px;line-height:11px;color:#ff3848;font-weight:normal;white-space:nowrap;will-change:transform">8.16341</div>
<div style="position:absolute;left:801.61px;width:60px;text-align:center;top:790.69px;font-size:11px;line-height:11px;color:#ff3848;font-weight:normal;white-space:nowrap;will-change:transform">8.16341</div>
<div style="position:absolute;left:450.00px;width:100px;text-align:center;top:807.19px;font-size:11px;line-height:11px;color:#ff3848;font-weight:normal;white-space:nowrap;will-change:transform">drift time (ms)</div>
<div style="position:absolute;left:46.8px;top:699.5px;width:40px;height:11px;text-align:center;font-size:11px;line-height:11px;color:#ff3848;transform:rotate(-90deg);">m/z</div>
<div style="position:absolute;left:903px;top:598px;width:43px;height:26px;background:#f7f8f8;border:1px solid #c8c9cb;border-radius:3px;box-sizing:border-box;"></div>
<div style="position:absolute;left:909.5px;top:606.19px;font-size:11px;line-height:11px;color:#31363b;font-weight:normal;white-space:nowrap;will-change:transform;">0</div>
<svg style="position:absolute;left:932px;top:603px" width="10" height="14" viewBox="0 0 10 14">
<path d="M1.5 5.5 L5 2 L8.5 5.5" stroke="#31363b" stroke-width="1.1" fill="none"/>
<path d="M1.5 9 L5 12.5 L8.5 9" stroke="#a0a3a6" stroke-width="1" fill="none"/>
</svg>
<svg style="position:absolute;left:911px;top:627.0px" width="14" height="14" viewBox="0 0 14 14"><rect width="14" height="14" fill="#050505"/><path d="M0.5 3.1 H9" stroke="#e4e400" stroke-width="1.3"/><path d="M13.3 3.1 L7.8 1.2 L7.8 5 Z" fill="#e4e400"/><text x="0.5" y="13.6" font-family="Liberation Sans" font-size="10" fill="#e4e400" stroke="#e4e400" stroke-width="0.4" textLength="13" lengthAdjust="spacingAndGlyphs">MZ</text></svg>
<svg style="position:absolute;left:911px;top:646.0px" width="14" height="14" viewBox="0 0 14 14"><rect width="14" height="14" fill="#050505"/><path d="M0.5 3.1 H9" stroke="#e4e400" stroke-width="1.3"/><path d="M13.3 3.1 L7.8 1.2 L7.8 5 Z" fill="#e4e400"/><text x="0.5" y="13.6" font-family="Liberation Sans" font-size="10" fill="#e4e400" stroke="#e4e400" stroke-width="0.4" textLength="13" lengthAdjust="spacingAndGlyphs">DT</text></svg>
<svg style="position:absolute;left:911px;top:664.0px" width="14" height="14" viewBox="0 0 14 14"><rect width="14" height="14" fill="#050505"/><path d="M0.5 3.1 H9" stroke="#e4e400" stroke-width="1.3"/><path d="M13.3 3.1 L7.8 1.2 L7.8 5 Z" fill="#e4e400"/><text x="0.5" y="13.6" font-family="Liberation Sans" font-size="10" fill="#e4e400" stroke="#e4e400" stroke-width="0.4" textLength="13" lengthAdjust="spacingAndGlyphs">RT</text></svg>
<svg style="position:absolute;left:911px;top:683.0px" width="14" height="14" viewBox="0 0 14 14"><rect width="14" height="14" fill="#050505"/><path d="M0.5 3.1 H9" stroke="#e4e400" stroke-width="1.3"/><path d="M13.3 3.1 L7.8 1.2 L7.8 5 Z" fill="#e4e400"/><text x="0.5" y="13.6" font-family="Liberation Sans" font-size="10" fill="#e4e400" stroke="#e4e400" stroke-width="0.4" textLength="13" lengthAdjust="spacingAndGlyphs">INT</text></svg>
<svg style="position:absolute;left:911px;top:701.0px" width="14" height="14" viewBox="0 0 14 14"><rect width="14" height="14" fill="#050505"/><path d="M1.7 12.5 V2.5" stroke="#e4e400" stroke-width="1.6" opacity="0.75"/><path d="M1.7 1 L0.3 4.5 L3.1 4.5 Z" fill="#e4e400"/><path d="M1 12.1 H11" stroke="#e4e400" stroke-width="1.6" opacity="0.75"/><path d="M13.3 12.1 L9.5 10.6 L9.5 13.6 Z" fill="#e4e400"/><text x="3.2" y="5.4" font-family="Liberation Sans" font-size="6.3" fill="#e4e400" stroke="#e4e400" stroke-width="0.25" textLength="9.8" lengthAdjust="spacingAndGlyphs">MZ</text><text x="3.2" y="10.9" font-family="Liberation Sans" font-size="6.3" fill="#e4e400" stroke="#e4e400" stroke-width="0.25" textLength="7.3" lengthAdjust="spacingAndGlyphs">RT</text></svg>
<svg style="position:absolute;left:911px;top:720.0px" width="14" height="14" viewBox="0 0 14 14"><rect width="14" height="14" fill="#050505"/><path d="M1.7 12.5 V2.5" stroke="#e4e400" stroke-width="1.6" opacity="0.75"/><path d="M1.7 1 L0.3 4.5 L3.1 4.5 Z" fill="#e4e400"/><path d="M1 12.1 H11" stroke="#e4e400" stroke-width="1.6" opacity="0.75"/><path d="M13.3 12.1 L9.5 10.6 L9.5 13.6 Z" fill="#e4e400"/><text x="3.2" y="5.4" font-family="Liberation Sans" font-size="6.3" fill="#e4e400" stroke="#e4e400" stroke-width="0.25" textLength="9.8" lengthAdjust="spacingAndGlyphs">DT</text><text x="3.2" y="10.9" font-family="Liberation Sans" font-size="6.3" fill="#e4e400" stroke="#e4e400" stroke-width="0.25" textLength="7.3" lengthAdjust="spacingAndGlyphs">MZ</text></svg>
<svg style="position:absolute;left:911px;top:738.0px" width="14" height="14" viewBox="0 0 14 14"><rect width="14" height="14" fill="#050505"/><path d="M1.7 12.5 V2.5" stroke="#e4e400" stroke-width="1.6" opacity="0.75"/><path d="M1.7 1 L0.3 4.5 L3.1 4.5 Z" fill="#e4e400"/><path d="M1 12.1 H11" stroke="#e4e400" stroke-width="1.6" opacity="0.75"/><path d="M13.3 12.1 L9.5 10.6 L9.5 13.6 Z" fill="#e4e400"/><text x="3.2" y="5.4" font-family="Liberation Sans" font-size="6.3" fill="#e4e400" stroke="#e4e400" stroke-width="0.25" textLength="9.8" lengthAdjust="spacingAndGlyphs">DT</text><text x="3.2" y="10.9" font-family="Liberation Sans" font-size="6.3" fill="#e4e400" stroke="#e4e400" stroke-width="0.25" textLength="7.3" lengthAdjust="spacingAndGlyphs">RT</text></svg>
<svg style="position:absolute;left:913px;top:513px" width="18" height="24" viewBox="0 0 18 24">
<path d="M2.8 2.4 L13.6 13.1 L11.2 16.5 L10 20.3 Q8 19 2.6 17.6 Z" fill="#f4f4f4" stroke="#3a3a3a" stroke-width="1.1" stroke-linejoin="round"/>
</svg>
<svg style="position:absolute;left:960px;top:64px" width="20" height="800" viewBox="0 0 20 800">
<path d="M4.5 8 L8 4.5 L11.5 8" stroke="#94979a" stroke-width="1.3" fill="none"/>
<path d="M4.5 774.8 L8 771.3 L11.5 774.8" stroke="#94979a" stroke-width="1.3" fill="none"/>
<path d="M4.5 783 L8 786.5 L11.5 783" stroke="#94979a" stroke-width="1.3" fill="none"/>
</svg>
<div style="position:absolute;left:962px;top:77px;width:11px;height:753px;background:#ebeced;border:2px solid #8b8e91;border-radius:3.5px;box-sizing:border-box;"></div>
<svg style="position:absolute;left:8px;top:855px" width="960" height="16" viewBox="0 0 960 16">
<path d="M9.5 4.5 L6 8 L9.5 11.5" stroke="#94979a" stroke-width="1.3" fill="none"/>
<path d="M935.5 4.5 L932 8 L935.5 11.5" stroke="#94979a" stroke-width="1.3" fill="none"/>
<path d="M945 4.5 L948.5 8 L945 11.5" stroke="#94979a" stroke-width="1.3" fill="none"/>
</svg>
<div style="position:absolute;left:22px;top:857px;width:913px;height:12px;background:linear-gradient(#eeeff0,#e4e5e6);border:2px solid #8b8e91;border-radius:3.5px;box-sizing:border-box;"></div>
</body></html>
